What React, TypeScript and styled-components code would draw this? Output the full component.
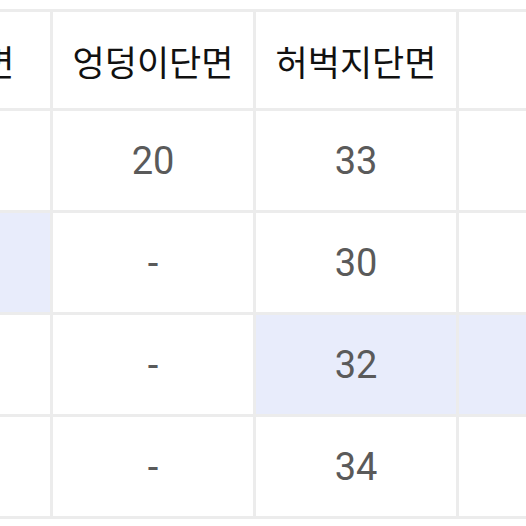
import React from 'react';
import styled, { createGlobalStyle } from 'styled-components';

const GlobalStyle = createGlobalStyle`
  html, body {
    margin: 0;
    padding: 0;
    background: #ffffff;
    overflow: hidden;
  }
`;

const Viewport = styled.div`
  width: 526px;
  height: 526px;
  overflow: hidden;
  background: #ffffff;
`;

const Grid = styled.div`
  display: grid;
  grid-template-columns: 200px 200px 200px 260px;
  grid-template-rows: 96px repeat(4, 99px);
  gap: 3px;
  width: max-content;
  padding: 3px;
  margin: 9px 0 0 -153px;
  background: #ececec;
`;

const Cell = styled.div<{ $head?: boolean; $highlight?: boolean }>`
  display: flex;
  align-items: center;
  justify-content: center;
  background: ${({ $highlight }) => ($highlight ? '#e8ecfb' : '#ffffff')};
  color: ${({ $head }) => ($head ? '#111111' : '#5a5a5a')};
  font-family: ${({ $head }) =>
    $head
      ? '"Noto Sans CJK KR", "Noto Sans", sans-serif'
      : 'Roboto, "Noto Sans CJK KR", sans-serif'};
  font-size: ${({ $head }) => ($head ? '35px' : '38px')};
  font-weight: 400;
  white-space: nowrap;
`;

const headers = ['허리단면', '엉덩이단면', '허벅지단면', '밑단단면'];

const rows: { values: string[]; hl: number[] }[] = [
  { values: ['36', '20', '33', '21'], hl: [] },
  { values: ['38', '-', '30', '20'], hl: [0] },
  { values: ['40', '-', '32', '22'], hl: [2, 3] },
  { values: ['42', '-', '34', '23'], hl: [] },
];

export default function App() {
  return (
    <>
      <GlobalStyle />
      <Viewport>
        <Grid>
          {headers.map((h) => (
            <Cell key={h} $head>
              {h}
            </Cell>
          ))}
          {rows.map((row, r) =>
            row.values.map((v, c) => (
              <Cell key={`${r}-${c}`} $highlight={row.hl.includes(c)}>
                {v}
              </Cell>
            ))
          )}
        </Grid>
      </Viewport>
    </>
  );
}
